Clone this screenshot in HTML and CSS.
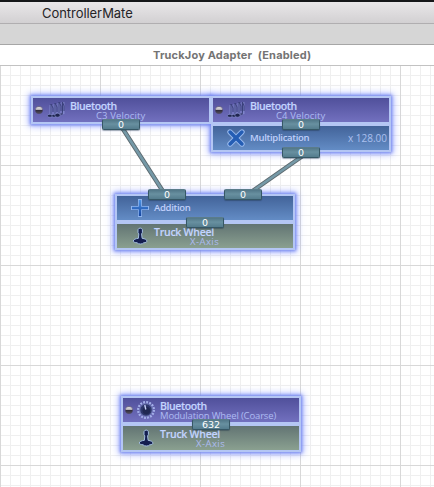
FILE: index.html
```html
<!DOCTYPE html>
<html lang="en">
<head>
<meta charset="utf-8">
<title>ControllerMate</title>
<link rel="stylesheet" href="styles.css">
</head>
<body>
<svg width="0" height="0" class="defs">
  <defs>
    <linearGradient id="blue" x2="0" y2="1"><stop offset="0" stop-color="#4b92e4"/><stop offset="1" stop-color="#1646a0"/></linearGradient>
    <linearGradient id="ledfill" x2="0" y2="1"><stop offset="0" stop-color="#9a97a0"/><stop offset=".2" stop-color="#dcdade"/><stop offset=".48" stop-color="#aaa7ae"/><stop offset=".56" stop-color="#312d3b"/><stop offset="1" stop-color="#56525f"/></linearGradient>
    <symbol id="led" viewBox="0 0 8 8"><circle cx="4" cy="4" r="3.7" fill="url(#ledfill)" stroke="#4a4668" stroke-width=".5"/></symbol>
    <symbol id="notes" viewBox="0 0 20 20">
      <g fill="none" stroke="#929cdc" stroke-width="3" opacity=".6"><path d="M5 15V5M9 15V4M13 15V3M17 14V2"/></g>
      <g fill="none" stroke="#3b417c" stroke-width="1"><path d="M5 15V4l2 4v4M9 15V3l2 4v5M13 15V2l2 4v5M16.5 14V2l1.5 4v5"/></g>
      <g fill="#20264f" stroke="#98a3e2" stroke-width=".5"><ellipse cx="4" cy="15.8" rx="2.7" ry="1.5"/><ellipse cx="8" cy="15.8" rx="2.2" ry="1.5"/><ellipse cx="11.5" cy="15.2" rx="2.7" ry="2"/><ellipse cx="15.5" cy="14" rx="1.7" ry="1.2" opacity=".6"/></g>
    </symbol>
    <symbol id="times" viewBox="0 0 20 20"><path d="M4 4l12 12M16 4L4 16" stroke="#97b8ec" stroke-width="5.4" stroke-linecap="round"/><path d="M4.1 4.1l11.8 11.8M15.9 4.1L4.1 15.9" stroke="#245db4" stroke-width="3.6" stroke-linecap="round"/></symbol>
    <symbol id="plus" viewBox="0 0 20 20"><path d="M1 8h7V1h4v7h7v4h-7v7H8v-7H1z" fill="#8fb4ed"/><path d="M2 8.8h6.8V2h2.4v6.8H18v2.4h-6.8V18H8.8v-6.8H2z" fill="url(#blue)"/></symbol>
    <symbol id="stick" viewBox="0 0 20 20"><path d="M8 3.7a2.3 2.3 0 0 1 4.4 0v2.8l-.8 1.4.5 4.4c2.9.4 5.1 1.5 4.8 3-.2.9-1.5 1.4-3.2 1.5-.8 1.6-5.7 1.6-6.6 0-2-.1-3.8-.8-3.8-1.7-.1-1.6 2.4-2.5 5.1-2.8l.4-4.4L8 6.5z" fill="#141e50" stroke="#a3bee0" stroke-width="1"/></symbol>
    <symbol id="knob" viewBox="0 0 20 20"><circle cx="10" cy="10" r="7.9" fill="none" stroke="#a3afe8" stroke-width="2.2" stroke-dasharray="1.9 1.2"/><circle cx="10" cy="10" r="6.2" fill="#2e376c" stroke="#8793cc" stroke-width=".6"/><circle cx="10.3" cy="10.6" r="3.8" fill="#202852"/><path d="M8.8 5l1 4.5" stroke="#c6cff6" stroke-width="1.4"/></symbol>
  </defs>
</svg>
<header class="titlebar">ControllerMate</header>
<div class="toolbar"></div>
<div class="heading"><span>TruckJoy Adapter&nbsp; (Enabled)</span></div>
<main class="canvas">
  <div class="node n1 glow"></div>
  <div class="node n2 glow"></div>
  <section class="node n1">
    <div class="block midi"><svg class="led"><use href="#led"/></svg><svg class="icon"><use href="#notes"/></svg><div class="name">Bluetooth</div><div class="sub vel">C3 Velocity</div></div>
  </section>
  <section class="node n2">
    <div class="block midi"><svg class="led"><use href="#led"/></svg><svg class="icon"><use href="#notes"/></svg><div class="name">Bluetooth</div><div class="sub vel">C4 Velocity</div></div>
    <div class="block math"><svg class="icon"><use href="#times"/></svg><div class="label mult">Multiplication</div><div class="value">x 128.00</div></div>
  </section>
  <section class="node n3 glow">
    <div class="block math"><svg class="icon"><use href="#plus"/></svg><div class="label">Addition</div></div>
    <div class="block output"><svg class="icon"><use href="#stick"/></svg><div class="name truck">Truck Wheel</div><div class="sub axis">X-Axis</div></div>
  </section>
  <section class="node n4 glow">
    <div class="block midi"><svg class="led"><use href="#led"/></svg><svg class="icon"><use href="#knob"/></svg><div class="name">Bluetooth</div><div class="sub mod">Modulation Wheel (Coarse)</div></div>
    <div class="block output"><svg class="icon"><use href="#stick"/></svg><div class="name truck">Truck Wheel</div><div class="sub axis">X-Axis</div></div>
  </section>
  <svg class="wires" viewBox="0 65 434 422"><g stroke="#5d6a70" stroke-width="4.4"><path d="M121 125L166 195M304 154L244 196"/></g><g stroke="#7599a7" stroke-width="2.6"><path d="M121 125L166 195M304 154L244 196"/></g></svg>
  <div class="port p1">0</div><div class="port p2">0</div><div class="port p3">0</div>
  <div class="port p4">0</div><div class="port p5">0</div><div class="port p6">0</div><div class="port p7">632</div>
</main>
</body>
</html>
```
FILE: styles.css
```css
* { box-sizing: border-box; }
body { margin: 0; width: 434px; height: 487px; overflow: hidden; background: #fff; font-family: "Open Sans", "Noto Sans", sans-serif; display: flex; flex-direction: column; }
.defs { position: absolute; }
.titlebar { height: 24px; flex: none; border-top: 2px solid #151719; border-bottom: 1px solid #b0aeb0; background: linear-gradient(#e9e7e9, #d2d0d2); padding-left: 42px; font: 13px/23px Inter, sans-serif; color: #252427; letter-spacing: -.05px; }
.toolbar { height: 21px; flex: none; background: #d6d6d6; border-bottom: 1px solid #a6a6a6; }
.heading { height: 21px; flex: none; border-bottom: 1px solid #c2c2c2; padding-left: 153px; font: bold 11px/20px Inter, sans-serif; letter-spacing: .18px; color: #747474; white-space: nowrap; }
.canvas { position: relative; flex: 1; overflow: hidden; background:
  linear-gradient(90deg, #d8d8d8 1px, transparent 1px) 0 0 / 100px 100px,
  linear-gradient(#d8d8d8 1px, transparent 1px) 0 99px / 100px 100px,
  linear-gradient(90deg, #efefef 1px, transparent 1px) 0 0 / 10px 10px,
  linear-gradient(#efefef 1px, transparent 1px) 0 9px / 10px 10px; }
.node { position: absolute; width: 180px; border: 2px solid #b4c6f4; background: #b4c6f4; display: flex; flex-direction: column; gap: 4px; }
.glow { box-shadow: 0 0 3px 1px #7688ee, 0 0 7px 2px rgba(112, 132, 255, .65); }
.n1 { left: 31px; top: 30px; height: 28px; }
.n2 { left: 211px; top: 30px; height: 56px; }
.n3 { left: 115px; top: 128px; height: 56px; }
.n4 { left: 121px; top: 330px; height: 56px; }
.block { position: relative; height: 24px; flex: none; color: #bfcffb; white-space: nowrap; }
.midi { background: linear-gradient(#50509b, #7270bf); }
.math { background: linear-gradient(#426399, #638cc5); }
.output { background: linear-gradient(#627473, #8aa090); }
.led { position: absolute; left: 2px; top: 8px; width: 8px; height: 8px; }
.icon { position: absolute; left: 13px; top: 2px; width: 20px; height: 20px; }
.name, .sub, .label, .value { position: absolute; line-height: 12px; }
.name { left: 37px; top: 2px; font-size: 10.5px; font-weight: 600; letter-spacing: -.42px; color: #c3d4ff; }
.n1 .name, .n2 .name, .midi .name { letter-spacing: -.4px; }
.name { -webkit-text-stroke: .15px #c3d4ff; letter-spacing: -.3px; }
.truck { letter-spacing: -.25px; }
.sub { top: 12px; font-size: 9.5px; color: #adbbf2; }
.vel { left: 63px; letter-spacing: .12px; }
.axis { left: 73px; letter-spacing: .45px; }
.mod { left: 37px; letter-spacing: -.15px; }
.label { left: 37px; top: 6px; font-size: 9.5px; font-weight: 600; letter-spacing: -.3px; }
.value { right: 2px; top: 6px; font-size: 10px; color: #abc0ef; }
.wires { position: absolute; left: 0; top: 0; width: 434px; height: 422px; }
.port { position: absolute; width: 38px; height: 11px; border: 1px solid #365765; border-top-color: #5b7c8a; border-radius: 2px; background: linear-gradient(#527788, #6890a0 45%, #547c8d); box-shadow: 0 1px 1px rgba(30, 50, 70, .4); color: #fff; font: 9.5px/9px "DejaVu Sans", sans-serif; text-align: center; }
.p1 { left: 102px; top: 53px; }
.p2 { left: 282px; top: 53px; }
.p3 { left: 282px; top: 81px; }
.p4 { left: 148px; top: 123px; }
.p5 { left: 224px; top: 123px; }
.p6 { left: 186px; top: 151px; }
.p7 { left: 192px; top: 353px; }
```
